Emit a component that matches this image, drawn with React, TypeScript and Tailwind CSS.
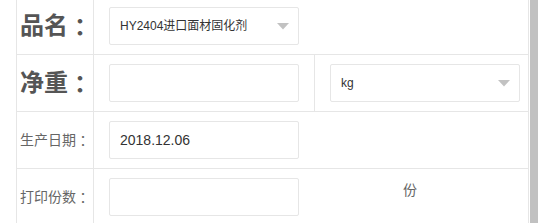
const font = { fontFamily: '"Liberation Sans", Arial, "Noto Sans CJK SC", sans-serif' }

function Caret() {
  return (
    <svg width="12" height="7" viewBox="0 0 12 7" className="shrink-0">
      <path d="M0 0 H12 L6 6.5 Z" fill="#c2c2c2" />
    </svg>
  )
}

function Select({ value }: { value: string }) {
  return (
    <div className="w-[190px] h-[38px] border border-[#e6e6e6] rounded-[2px] bg-white flex items-center pl-[10px] pr-[9px] text-[12px] text-[#333]">
      <span className="flex-1 truncate">{value}</span>
      <Caret />
    </div>
  )
}

function Input({ value }: { value?: string }) {
  return (
    <div className="w-[190px] h-[38px] border border-[#e6e6e6] rounded-[2px] bg-white flex items-center pl-[10px] text-[14px] text-[#333]">
      {value}
    </div>
  )
}

function Label({ text, big }: { text: string; big?: boolean }) {
  return (
    <div
      className={`w-[77px] shrink-0 border-r border-[#e6e6e6] flex items-center pl-[3px] whitespace-nowrap ${
        big ? 'text-[24px] font-bold text-[#555]' : 'text-[14px] text-[#666]'
      }`}
    >
      {text}
      <span className="font-['Noto_Sans_CJK_JP',sans-serif]">：</span>
    </div>
  )
}

export default function App() {
  return (
    <div className="w-[538px] h-[223px] overflow-hidden bg-white flex" style={font}>
      <div className="flex-1 pl-4 pr-px">
        <div className="-mt-[3px] border-l border-r border-[#e6e6e6]">
          {/* 品名 */}
          <div className="h-[57px] border-t border-[#e6e6e6] flex">
            <Label text="品名" big />
            <div className="flex-1 flex items-center pl-[15px]">
              <Select value="HY2404进口面材固化剂" />
            </div>
          </div>

          {/* 净重 */}
          <div className="h-[57px] border-t border-[#e6e6e6] flex">
            <Label text="净重" big />
            <div className="w-[221px] border-r border-[#e6e6e6] flex items-center pl-[15px]">
              <Input />
            </div>
            <div className="flex-1 flex items-center pl-[15px]">
              <Select value="kg" />
            </div>
          </div>

          {/* 生产日期 */}
          <div className="h-[57px] border-t border-[#e6e6e6] flex">
            <Label text="生产日期" />
            <div className="flex-1 flex items-center pl-[15px]">
              <Input value="2018.12.06" />
            </div>
          </div>

          {/* 打印份数 */}
          <div className="h-[57px] border-t border-[#e6e6e6] flex">
            <Label text="打印份数" />
            <div className="w-[221px] flex items-center pl-[15px]">
              <Input />
            </div>
            <div className="flex-1 pl-[88px] pt-[11px] text-[14px] text-[#666]">份</div>
          </div>
        </div>
      </div>
      <div className="w-2 bg-[#c1c1c1]" />
    </div>
  )
}
